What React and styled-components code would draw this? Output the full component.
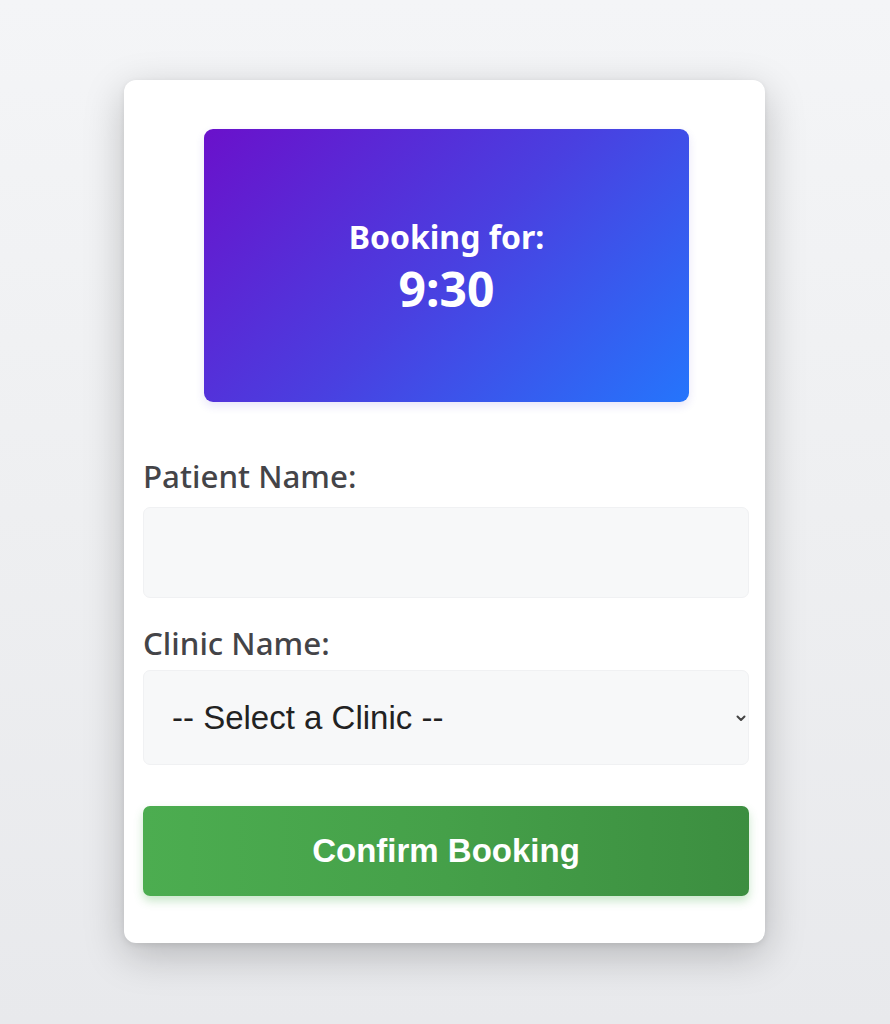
import React from "react";
import styled, { createGlobalStyle } from "styled-components";

const Global = createGlobalStyle`
  html, body { margin: 0; padding: 0; }
  body {
    min-height: 1024px;
    background: linear-gradient(180deg, #f4f5f7 0%, #eeeff1 50%, #e8e9ec 100%);
    font-family: "Noto Sans", "Open Sans", sans-serif;
  }
`;

const Page = styled.div`
  display: flex;
  justify-content: center;
  padding-top: 80px;
  padding-left: 124px;
  padding-right: 125px;
`;

const Card = styled.div`
  width: 641px;
  box-sizing: border-box;
  background: #ffffff;
  border-radius: 12px;
  box-shadow: 0 12px 40px rgba(0, 0, 0, 0.22), 0 2px 6px rgba(0, 0, 0, 0.08);
  padding: 49px 16px 47px 19px;
  display: flex;
  flex-direction: column;
`;

const Banner = styled.div`
  align-self: center;
  width: 485px;
  height: 273px;
  margin-left: 1px;
  border-radius: 9px;
  background: linear-gradient(135deg, #6a11cb 0%, #4a3fe0 50%, #2575fc 100%);
  color: #fff;
  display: flex;
  flex-direction: column;
  align-items: center;
  justify-content: center;
  box-shadow: 0 4px 10px rgba(60, 40, 200, 0.12);
`;

const BannerTitle = styled.div`
  font-weight: 700;
  font-size: 32px;
  line-height: 38px;
  margin-top: 4px;
`;

const BannerTime = styled.div`
  font-weight: 700;
  font-size: 48px;
  line-height: 58px;
  margin-top: 4px;
  margin-bottom: 0px;
`;

const Label = styled.label`
  display: block;
  font-size: 31.3px;
  font-weight: 500;
  line-height: 40px;
  color: #444448;
  margin-top: ${(p) => p.$top}px;
  margin-bottom: ${(p) => p.$bottom}px;
`;

const Input = styled.input`
  display: block;
  width: 100%;
  box-sizing: border-box;
  height: 91px;
  border: 1px solid #f0f1f3;
  border-radius: 7px;
  background: #f7f8f9;
  font-size: 30px;
  padding: 0 28px;
  outline: none;
`;

const SelectWrap = styled.div`
  position: relative;
`;

const Select = styled.select`
  display: block;
  width: 100%;
  box-sizing: border-box;
  height: 95px;
  border: 1px solid #f0f1f3;
  border-radius: 7px;
  background: #f7f8f9;
  font-family: "Liberation Sans", Arial, sans-serif;
  font-size: 33px;
  color: #222;
  padding: 0 28px;
  appearance: none;
  -webkit-appearance: none;
  outline: none;
`;

const Chevron = styled.svg`
  position: absolute;
  right: 3px;
  top: 45px;
  width: 10px;
  height: 7px;
  pointer-events: none;
`;

const Button = styled.button`
  margin-top: 41px;
  width: 100%;
  height: 90px;
  border: none;
  border-radius: 7px;
  background: linear-gradient(90deg, #4cad50 0%, #45a049 50%, #3c8e40 100%);
  color: #fff;
  font-family: "Liberation Sans", Arial, sans-serif;
  font-weight: 700;
  font-size: 33px;
  box-shadow: 0 5px 10px rgba(76, 175, 80, 0.3);
  cursor: pointer;
`;

export default function App() {
  return (
    <>
      <Global />
      <Page>
        <Card>
          <Banner>
            <BannerTitle>Booking for:</BannerTitle>
            <BannerTime>9:30</BannerTime>
          </Banner>
          <Label $top={54} $bottom={11}>Patient Name:</Label>
          <Input type="text" />
          <Label $top={25} $bottom={7}>Clinic Name:</Label>
          <SelectWrap>
            <Select defaultValue="">
              <option value="">-- Select a Clinic --</option>
            </Select>
            <Chevron viewBox="0 0 10 7">
              <path d="M1.5 1.5 L5 5 L8.5 1.5" fill="none" stroke="#444" strokeWidth="2" strokeLinecap="round" strokeLinejoin="round" />
            </Chevron>
          </SelectWrap>
          <Button>Confirm Booking</Button>
        </Card>
      </Page>
    </>
  );
}
